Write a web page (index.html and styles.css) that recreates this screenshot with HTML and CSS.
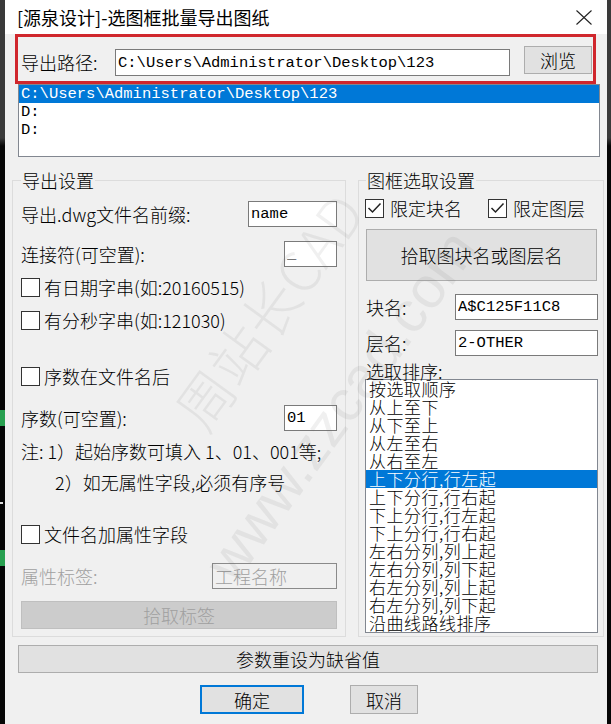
FILE: index.html
```html
<!DOCTYPE html>
<html lang="zh-CN">

<head>
    <meta charset="UTF-8">
    <meta name="viewport" content="width=device-width, initial-scale=1.0">
    <title>选图框批量导出图纸</title>
    <link rel="stylesheet" href="styles.css">
</head>

<body>
    <div class="desk">
        <div class="edge edge-left">
            <span class="mark mark-top"></span>
            <span class="dash"></span>
            <span class="mark mark-bottom"></span>
        </div>

        <div class="window">
            <div class="titlebar">
                <span class="title">[源泉设计]-选图框批量导出图纸</span>
                <svg class="close" width="16" height="15" viewBox="0 0 16 15">
                    <path d="M0.5 0.5 L15.5 14.5 M15.5 0.5 L0.5 14.5" stroke="#222" stroke-width="1.1" fill="none" />
                </svg>
            </div>

            <!-- export path -->
            <div class="path-bar">
                <label class="path-label" for="exportPath">导出路径:</label>
                <input type="text" id="exportPath" class="textbox path-input mono" value="C:\Users\Administrator\Desktop\123">
                <button class="btn browse">浏览</button>
            </div>
            <ul class="listbox path-list mono">
                <li class="selected">C:\Users\Administrator\Desktop\123</li>
                <li>D:</li>
                <li>D:</li>
            </ul>

            <div class="groups">
                <fieldset class="group group-export">
                    <legend>导出设置</legend>

                    <div class="row row-prefix">
                        <span>导出.dwg文件名前缀:</span>
                        <input type="text" class="textbox mono prefix-input" value="name">
                    </div>
                    <div class="row row-joiner">
                        <span>连接符(可空置):</span>
                        <input type="text" class="textbox mono short-input" value="_">
                    </div>
                    <label class="check cb-date"><span class="box"></span>有日期字串(如:20160515)</label>
                    <label class="check cb-time"><span class="box"></span>有分秒字串(如:121030)</label>
                    <label class="check cb-after"><span class="box"></span>序数在文件名后</label>
                    <div class="row row-seq">
                        <span>序数(可空置):</span>
                        <input type="text" class="textbox mono short-input" value="01">
                    </div>
                    <p class="note note-first">注: 1）起始序数可填入 1、01、001等;</p>
                    <p class="note note-second">2）如无属性字段,必须有序号</p>
                    <label class="check cb-attr"><span class="box"></span>文件名加属性字段</label>
                    <div class="row row-attr disabled">
                        <span>属性标签:</span>
                        <input type="text" class="textbox attr-input" value="工程名称" disabled>
                    </div>
                    <button class="btn pick-tag" disabled>拾取标签</button>
                </fieldset>

                <fieldset class="group group-frame">
                    <legend>图框选取设置</legend>

                    <div class="check-row">
                        <label class="check"><span class="box checked"><svg width="15" height="12" viewBox="0 0 15 12"><path d="M1.5 6 L5.5 10 L13.5 1.5" stroke="#222" stroke-width="1.5" fill="none" /></svg></span>限定块名</label>
                        <label class="check"><span class="box checked"><svg width="15" height="12" viewBox="0 0 15 12"><path d="M1.5 6 L5.5 10 L13.5 1.5" stroke="#222" stroke-width="1.5" fill="none" /></svg></span>限定图层</label>
                    </div>
                    <button class="btn pick-block">拾取图块名或图层名</button>
                    <div class="row row-block">
                        <span>块名:</span>
                        <input type="text" class="textbox mono name-input" value="A$C125F11C8">
                    </div>
                    <div class="row row-layer">
                        <span>层名:</span>
                        <input type="text" class="textbox mono name-input" value="2-OTHER">
                    </div>
                    <div class="sort-label">选取排序:</div>
                    <ul class="listbox sort-list">
                        <li>按选取顺序</li>
                        <li>从上至下</li>
                        <li>从下至上</li>
                        <li>从左至右</li>
                        <li>从右至左</li>
                        <li class="selected">上下分行,行左起</li>
                        <li>上下分行,行右起</li>
                        <li>下上分行,行左起</li>
                        <li>下上分行,行右起</li>
                        <li>左右分列,列上起</li>
                        <li>左右分列,列下起</li>
                        <li>右左分列,列上起</li>
                        <li>右左分列,列下起</li>
                        <li>沿曲线路线排序</li>
                    </ul>
                </fieldset>
            </div>

            <button class="btn reset">参数重设为缺省值</button>

            <div class="actions">
                <button class="btn ok">确定</button>
                <button class="btn cancel">取消</button>
            </div>

            <!-- watermark over the dialog -->
            <div class="watermark wm-name">周站长CAD</div>
            <div class="watermark wm-site">www.zzcad.com</div>
        </div>

        <div class="edge edge-right"></div>
    </div>
</body>

</html>
```

FILE: styles.css
```css
body {
    margin: 0;
    background-color: #000;
    font-family: "Noto Sans CJK SC", "Noto Sans", sans-serif;
    font-size: 18px;
    font-weight: 300;
    color: #000;
}

.desk {
    display: flex;
    height: 724px;
    overflow: hidden;
}

/* dark CAD screen behind the dialog */
.edge {
    background: linear-gradient(#3a3a3a 0, #3a3a3a 138px, #060606 146px);
}

.edge-left {
    width: 5px;
    display: flex;
    flex-direction: column;
}

.edge-right {
    width: 4px;
}

.mark {
    display: block;
    width: 5px;
    height: 16px;
    background-color: #28a050;
}

.mark-top {
    margin-top: 410px;
}

.dash {
    display: block;
    width: 3px;
    height: 2px;
    margin-top: 76px;
    background-color: #ddd;
}

.mark-bottom {
    margin-top: 46px;
}

.window {
    position: relative;
    width: 602px;
    background-color: #f0f0f0;
    overflow: hidden;
}

.titlebar {
    height: 34px;
    background-color: #fff;
    display: flex;
    align-items: center;
    justify-content: space-between;
    padding: 0 15px 0 12px;
}

.title {
    line-height: 34px;
    font-weight: 400;
    white-space: nowrap;
}

.mono {
    font-family: "Liberation Mono", monospace;
    font-size: 15.5px;
    font-weight: 400;
}

.textbox {
    box-sizing: border-box;
    height: 26px;
    margin: 0;
    padding: 0 2px;
    border: 1px solid #7a7a7a;
    background-color: #fff;
    color: #000;
    outline: none;
}

.btn {
    box-sizing: border-box;
    margin: 0;
    padding: 0;
    font-family: inherit;
    font-size: 18px;
    font-weight: 300;
    color: #000;
    background-color: #e1e1e1;
    border: 1px solid #adadad;
    line-height: 1;
}

.btn:disabled {
    background-color: #cccccc;
    border-color: #bfbfbf;
    color: #a0a0a0;
}

/* path row inside the red highlight */
.path-bar {
    box-sizing: border-box;
    width: 581px;
    height: 50px;
    margin-left: 10px;
    border: 3px solid #d0272d;
    display: flex;
    align-items: flex-start;
    padding: 9px 1px 0 3px;
}

.path-label {
    width: 94px;
    line-height: 27px;
    margin-top: 3px;
    white-space: nowrap;
}

.path-input {
    width: 395px;
    height: 27px;
    margin-top: 3px;
    margin-right: 14px;
}

.browse {
    width: 68px;
    height: 28px;
}

.listbox {
    box-sizing: border-box;
    margin: 0;
    padding: 0;
    list-style: none;
    background-color: #fff;
    border: 1px solid #828790;
    overflow: hidden;
}

.listbox li {
    height: 18px;
    line-height: 18px;
    white-space: nowrap;
}

.listbox .selected {
    background-color: #0078d7;
    color: #fff;
}

.path-list {
    width: 582px;
    height: 73px;
    margin-left: 13px;
}

.path-list li {
    padding-left: 2px;
}

/* two group boxes */
.groups {
    display: flex;
    gap: 12px;
    margin-top: 14px;
    padding-left: 7px;
}

.group {
    box-sizing: border-box;
    margin: 0;
    min-width: 0;
    border: 1px solid #dcdcdc;
}

.group legend {
    padding: 0 1px;
    line-height: 18px;
}

.group-export {
    width: 334px;
    padding: 0 8px 7px;
}

.group-frame {
    width: 246px;
    padding: 0 5px 3px 7px;
}

.row {
    display: flex;
    align-items: center;
    height: 26px;
    white-space: nowrap;
}

.row .textbox {
    margin-left: auto;
}

.check {
    display: flex;
    align-items: center;
    gap: 4px;
    height: 20px;
    white-space: nowrap;
}

.box {
    box-sizing: border-box;
    width: 19px;
    height: 19px;
    border: 1px solid #333;
    background-color: #fff;
    display: flex;
    align-items: center;
    justify-content: center;
}

.note {
    margin: 0;
    height: 20px;
    line-height: 20px;
    white-space: nowrap;
}

.row-prefix {
    margin-top: 12px;
}

.prefix-input {
    width: 89px;
}

.short-input {
    width: 53px;
}

.row-joiner {
    margin-top: 14px;
}

.cb-date {
    margin-top: 10px;
}

.cb-time {
    margin-top: 13px;
}

.cb-after {
    margin-top: 36px;
}

.row-seq {
    margin-top: 19px;
}

.note-first {
    margin-top: 10px;
}

.note-second {
    margin-top: 11px;
    padding-left: 34px;
}

.cb-attr {
    margin-top: 32px;
}

.row-attr {
    margin-top: 19px;
}

.disabled {
    color: #a0a0a0;
}

.attr-input {
    width: 125px;
    font-family: inherit;
    font-size: 18px;
    font-weight: 300;
    background-color: #f0f0f0;
    border-color: #8a8a8a;
    color: #a0a0a0;
}

.pick-tag {
    display: block;
    width: 100%;
    height: 28px;
    margin-top: 12px;
}

.check-row {
    display: flex;
    height: 20px;
    margin-top: 9px;
    margin-left: -1px;
}

.check-row .check {
    gap: 6px;
}

.check-row .check + .check {
    margin-left: 26px;
}

.pick-block {
    display: block;
    width: 231px;
    height: 52px;
    margin-top: 11px;
}

.row-block {
    margin-top: 13px;
}

.row-layer {
    margin-top: 10px;
}

.name-input {
    width: 143px;
}

.sort-label {
    height: 18px;
    line-height: 18px;
    margin-top: 6px;
    white-space: nowrap;
}

.sort-list {
    width: 233px;
    height: 254px;
    margin-top: -1px;
    margin-left: -1px;
}

.sort-list li {
    padding-left: 3px;
    font-size: 17px;
    letter-spacing: 0.5px;
}

.reset {
    display: block;
    width: 580px;
    height: 28px;
    margin: 8px 0 0 13px;
}

.actions {
    display: flex;
    gap: 46px;
    margin-top: 12px;
    padding-left: 195px;
}

.ok {
    width: 104px;
    height: 29px;
    border: 2px solid #0078d7;
}

.cancel {
    width: 68px;
    height: 29px;
}

.watermark {
    position: absolute;
    pointer-events: none;
    white-space: nowrap;
    color: rgba(110, 110, 110, 0.1);
    transform: translate(-50%, -50%) rotate(-54deg);
}

.wm-name {
    left: 262px;
    top: 310px;
    font-size: 56px;
}

.wm-site {
    left: 335px;
    top: 405px;
    font-family: "Liberation Sans", sans-serif;
    font-size: 58px;
}
```
